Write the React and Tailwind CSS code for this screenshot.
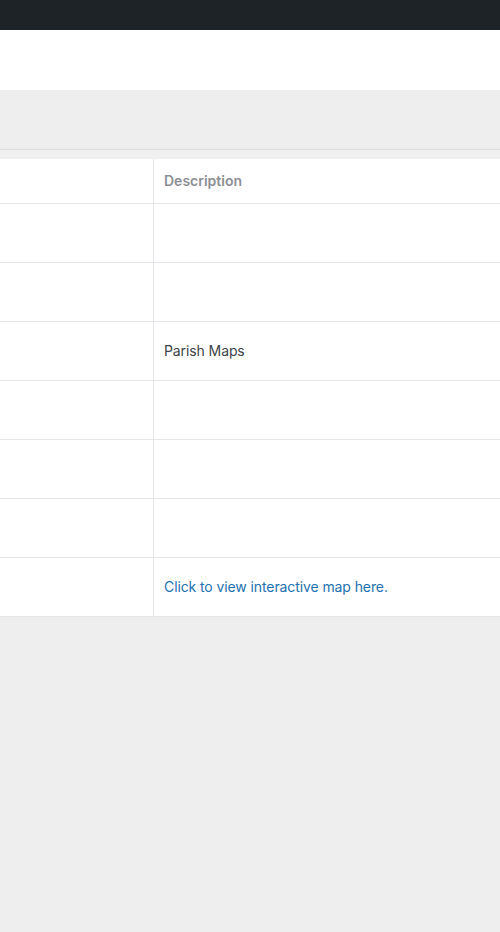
const rows = [
  { desc: "" },
  { desc: "" },
  { desc: "Parish Maps" },
  { desc: "" },
  { desc: "" },
  { desc: "" },
  { desc: "Click to view interactive map here.", link: true },
];

export default function App() {
  return (
    <div className="min-h-[932px] bg-[#eeeeee] font-['Inter','Liberation_Sans',sans-serif] text-[14px]">
      <div className="h-[30px] bg-[#1d2327]" />
      <div className="h-[60px] bg-white" />
      <div className="h-[60px] border-b border-[#dcdcde]" />
      <div className="h-[9px] bg-[#f0f0f1]" />
      <div className="bg-white">
        <div className="flex h-[45px] border-b border-[#e6e6ea]">
          <div className="w-[154px] border-r border-[#e6e6ea]" />
          <div className="flex items-center pl-[10px] pb-[2px] font-semibold text-[#8c8f94]">Description</div>
        </div>
        {rows.map((r, i) => (
          <div key={i} className="flex h-[59px] border-b border-[#e6e6ea]">
            <div className="w-[154px] border-r border-[#e6e6ea]" />
            <div className="flex items-center pl-[10px] pb-[2px] tracking-[-0.1px]">
              {r.link ? (
                <a className="text-[#2271b1]">{r.desc}</a>
              ) : (
                <span className="text-[#3c434a]">{r.desc}</span>
              )}
            </div>
          </div>
        ))}
      </div>
    </div>
  );
}
